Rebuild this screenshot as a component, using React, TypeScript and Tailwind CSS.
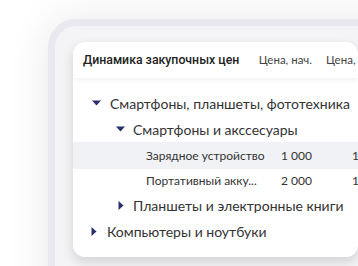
import React from "react";

const Down = () => (
  <svg width="9" height="6" viewBox="0 0 9 6" className="shrink-0">
    <path d="M0 0.5 L9 0.5 L4.5 5.5 Z" fill="#2b2f6b" />
  </svg>
);
const Right = () => (
  <svg width="6" height="9" viewBox="0 0 6 9" className="shrink-0">
    <path d="M0.5 0 L5.5 4.5 L0.5 9 Z" fill="#2b2f6b" />
  </svg>
);

export default function App() {
  return (
    <div
      className="w-[358px] h-[266px] bg-white overflow-hidden pl-[48px] pt-[19px]"
      style={{ fontFamily: 'Lato, "Noto Sans", sans-serif' }}
    >
      <div className="w-[360px] h-[300px] rounded-[28px] border-[7px] border-[#e8e8ee] bg-[#f4f4f7] pl-[18px] pt-[16px] shadow-[0_0_40px_rgba(40,40,70,0.10)]">
        <div className="w-[285px] h-[215px] bg-white rounded-[12px] overflow-hidden shadow-[0_5px_12px_rgba(0,0,0,0.14)]">
          <div className="h-[36px] flex items-center pl-[10px] shadow-[0_2px_6px_rgba(0,0,0,0.06)] relative whitespace-nowrap">
            <div className="w-[175px] shrink-0 text-[12.3px] font-medium text-[#222]" style={{ fontFamily: 'Roboto, sans-serif' }}>
              Динамика закупочных цен
            </div>
            <div className="w-[54px] shrink-0 text-right text-[11.5px] text-[#444]">Цена, нач.</div>
            <div className="ml-[14px] shrink-0 text-[11.5px] text-[#444]">Цена, кон.</div>
          </div>
          <div className="pt-[12px] text-[#333] whitespace-nowrap">
            <div className="h-[26px] flex items-center pl-[19px] gap-[9px] text-[14px]">
              <Down />
              <span className="shrink-0">Смартфоны, планшеты, фототехника</span>
            </div>
            <div className="h-[26px] flex items-center pl-[43px] gap-[8px] text-[14px]">
              <Down />
              <span className="shrink-0">Смартфоны и акссесуары</span>
            </div>
            <div className="h-[27px] flex items-center bg-[#f1f2f6] pl-[73px] text-[12px]">
              <span className="w-[130px] shrink-0">Зарядное устройство</span>
              <span className="w-[36px] shrink-0 text-right">1 000</span>
              <span className="ml-[40px] shrink-0">1 200</span>
            </div>
            <div className="h-[24px] flex items-center pl-[73px] text-[12px]">
              <span className="w-[130px] shrink-0">Портативный акку...</span>
              <span className="w-[36px] shrink-0 text-right">2 000</span>
              <span className="ml-[40px] shrink-0">1 800</span>
            </div>
            <div className="h-[25px] flex items-center pl-[45px] gap-[9px] text-[14px]">
              <Right />
              <span className="shrink-0">Планшеты и электронные книги</span>
            </div>
            <div className="h-[26px] flex items-center pl-[18px] gap-[10px] text-[14px]">
              <Right />
              <span className="shrink-0">Компьютеры и ноутбуки</span>
            </div>
          </div>
        </div>
      </div>
    </div>
  );
}
